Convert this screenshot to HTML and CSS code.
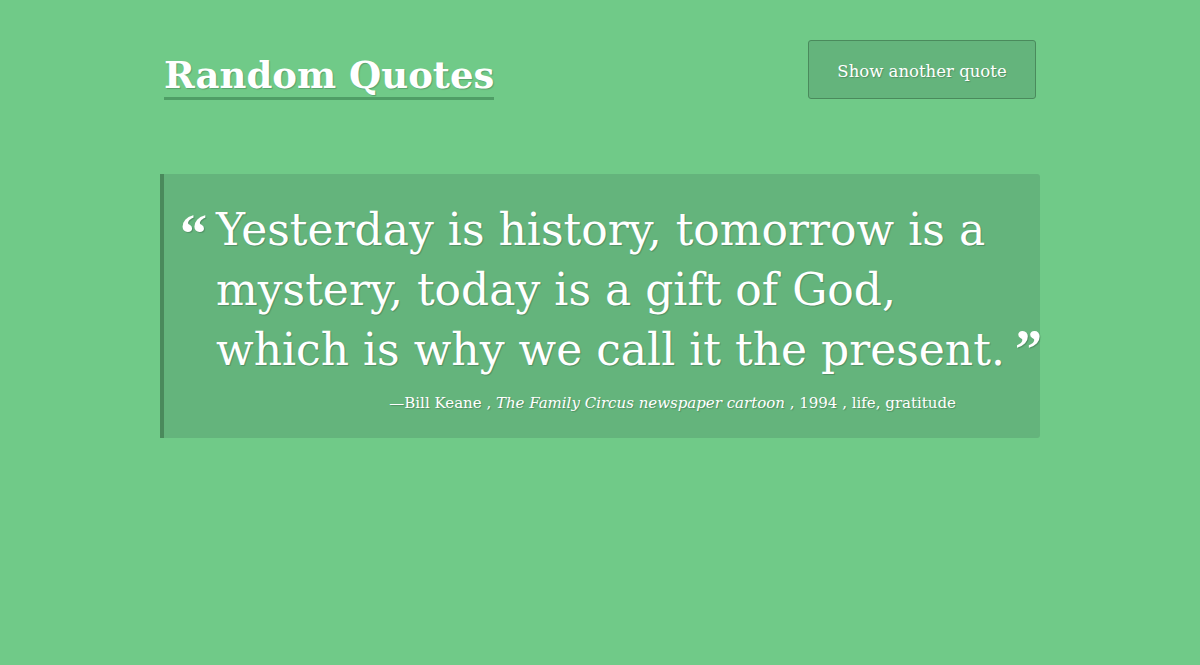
FILE: index.html
```html
<!DOCTYPE html>
<html lang="en">
<head>
<meta charset="utf-8">
<title>Random Quotes</title>
<link rel="stylesheet" href="styles.css">
</head>
<body>
<div class="wrap">
  <header class="top">
    <h1 class="title">Random Quotes</h1>
    <button class="btn" type="button">Show another quote</button>
  </header>
  <blockquote class="quote">
    <span class="mark-open">“</span>
    <div class="body">
      <p class="text">Yesterday is history, tomorrow is a<br>mystery, today is a gift of God,<br>which is why we call it the present.<span class="mark-close">”</span></p>
      <p class="source">—Bill Keane , <em>The Family Circus newspaper cartoon</em> , 1994 , life, gratitude</p>
    </div>
  </blockquote>
</div>
</body>
</html>
```

FILE: styles.css
```css
html, body {
  margin: 0;
  padding: 0;
}
body {
  background: #70ca88;
  color: #fff;
  font-family: "DejaVu Serif", "Liberation Serif", serif;
  height: 665px;
}
.wrap {
  width: 880px;
  margin: 0 auto;
}
.top {
  display: flex;
  justify-content: space-between;
  align-items: flex-start;
  padding: 40px 4px 0;
  height: 174px;
  box-sizing: border-box;
}
.title {
  margin: 14px 0 0;
  font-size: 37px;
  font-weight: bold;
  line-height: 43px;
  border-bottom: 3px solid #4f9e66;
  text-shadow: 1px 1px 1px rgba(0,0,0,0.2);
}
.btn {
  width: 228px;
  height: 59px;
  background: #64b47c;
  border: 1px solid #4a8a5c;
  border-radius: 3px;
  color: #fff;
  font-family: inherit;
  font-size: 16.5px;
  text-shadow: 1px 1px 1px rgba(0,0,0,0.2);
  padding: 3px 0 0;
}
.quote {
  margin: 0;
  display: flex;
  background: #64b47c;
  border-left: 4px solid #4a8a5c;
  border-radius: 0 3px 3px 0;
  padding: 26px 0 26px 16px;
  text-shadow: 1px 1px 1px rgba(0,0,0,0.2);
}
.mark-open,
.mark-close {
  font-family: "Liberation Serif", serif;
  font-weight: bold;
}
.mark-open {
  font-size: 54px;
  line-height: 60px;
  width: 36px;
  flex: none;
  margin-top: 4px;
}
.body {
  flex: 1;
  min-width: 0;
}
.text {
  margin: 0;
  font-size: 44px;
  line-height: 60px;
  white-space: nowrap;
}
.mark-close {
  font-size: 54px;
  margin-left: 10px;
  vertical-align: -2px;
  line-height: 1;
}
.source {
  margin: 14px 0 0;
  text-align: right;
  padding-right: 84px;
  font-size: 15px;
}
```
